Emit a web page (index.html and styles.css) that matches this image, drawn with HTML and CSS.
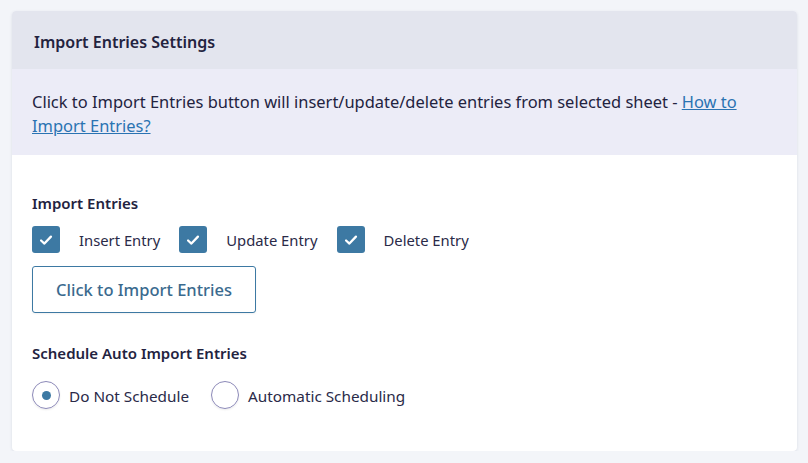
FILE: index.html
```html
<!DOCTYPE html>
<html>
<head>
<meta charset="utf-8">
<link rel="stylesheet" href="styles.css">
</head>
<body>
<div class="card">
  <div class="card-header">Import Entries Settings</div>
  <div class="notice">Click to Import Entries button will insert/update/delete entries from selected sheet - <a href="#">How to Import Entries?</a></div>
  <div class="card-body">
    <div class="label">Import Entries</div>
    <div class="checks">
      <label class="check"><span class="box"><svg viewBox="0 0 16 16" width="18" height="18"><path d="M3.6 8.4 L6.6 11.2 L12.4 5" fill="none" stroke="#fff" stroke-width="2" stroke-linecap="round" stroke-linejoin="round"/></svg></span><span class="text">Insert Entry</span></label>
      <label class="check"><span class="box"><svg viewBox="0 0 16 16" width="18" height="18"><path d="M3.6 8.4 L6.6 11.2 L12.4 5" fill="none" stroke="#fff" stroke-width="2" stroke-linecap="round" stroke-linejoin="round"/></svg></span><span class="text">Update Entry</span></label>
      <label class="check"><span class="box"><svg viewBox="0 0 16 16" width="18" height="18"><path d="M3.6 8.4 L6.6 11.2 L12.4 5" fill="none" stroke="#fff" stroke-width="2" stroke-linecap="round" stroke-linejoin="round"/></svg></span><span class="text">Delete Entry</span></label>
    </div>
    <button class="btn">Click to Import Entries</button>
    <div class="label label-2">Schedule Auto Import Entries</div>
    <div class="radios">
      <label class="radio"><span class="circle checked"></span><span class="text">Do Not Schedule</span></label>
      <label class="radio"><span class="circle"></span><span class="text">Automatic Scheduling</span></label>
    </div>
  </div>
</div>
</body>
</html>
```

FILE: styles.css
```css
html, body {
  margin: 0;
  padding: 0;
  background: #f3f5f9;
}
body {
  padding: 11px 11px 0 12px;
  font-family: "Noto Sans", "Open Sans", sans-serif;
  color: #1e1e3c;
}
.card {
  background: #fff;
  border-radius: 4px;
  box-shadow: 0 1px 3px rgba(40, 50, 90, 0.12);
  overflow: hidden;
  width: 785px;
  height: 440px;
}
.card-header {
  background: #e3e5ee;
  height: 58px;
  box-sizing: border-box;
  padding: 20px 22px 0 22px;
  font-size: 16px;
  font-weight: 600;
  line-height: 22px;
  color: #23233f;
}
.notice {
  background: #ececf7;
  height: 86px;
  box-sizing: border-box;
  padding: 21px 40px 0 20px;
  font-size: 16.45px;
  line-height: 24px;
  color: #23233f;
}
.notice a {
  color: #2a73b2;
  text-decoration: underline;
}
.card-body {
  padding: 38px 20px 0 20px;
}
.label {
  font-size: 15px;
  font-weight: 600;
  line-height: 20px;
  color: #23233f;
}
.checks {
  display: flex;
  gap: 19px;
  margin-top: 13px;
}
.check {
  display: flex;
  align-items: center;
  gap: 19px;
}
.box {
  width: 28px;
  height: 27px;
  border-radius: 3px;
  background: #3d79a3;
  display: flex;
  align-items: center;
  justify-content: center;
}
.text {
  font-size: 14.8px;
  color: #2a2a48;
  line-height: 20px;
  padding-top: 1px;
}
.btn {
  display: block;
  margin-top: 13px;
  width: 224px;
  height: 47px;
  background: #fff;
  border: 1px solid #3d79a3;
  border-radius: 3px;
  font-family: inherit;
  font-size: 16.5px;
  font-weight: 500;
  color: #3a6a8e;
  box-shadow: 0 1px 2px rgba(0,0,0,0.06);
  padding: 0;
}
.label-2 {
  margin-top: 30px;
}
.radios {
  display: flex;
  gap: 22px;
  margin-top: 18px;
}
.radio {
  display: flex;
  align-items: center;
  gap: 9px;
}
.radio .text {
  font-size: 15.3px;
  padding-top: 2px;
}
.circle {
  width: 26px;
  height: 26px;
  border-radius: 50%;
  border: 1px solid #8c89b8;
  box-shadow: 0 1px 2px rgba(0,0,0,0.08);
  display: flex;
  align-items: center;
  justify-content: center;
}
.circle.checked::after {
  content: "";
  width: 9px;
  height: 9px;
  border-radius: 50%;
  background: #3d79a3;
}
```
